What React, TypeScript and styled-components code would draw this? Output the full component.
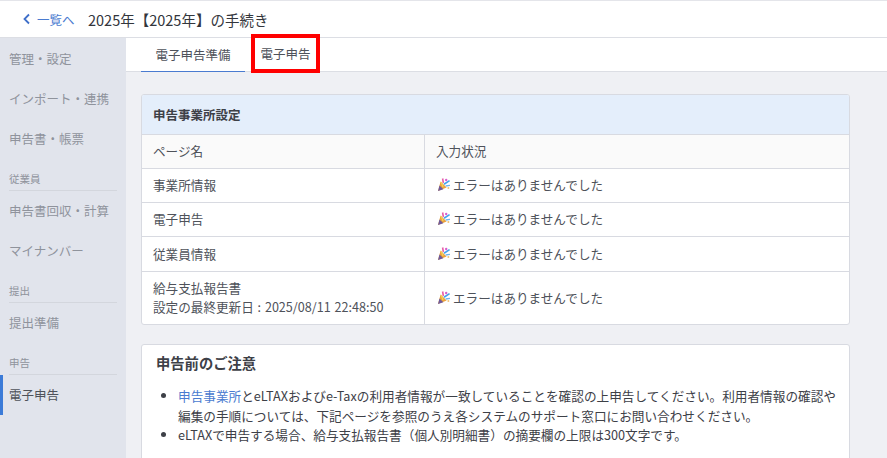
import React from "react";
import styled, { createGlobalStyle } from "styled-components";

const GlobalStyle = createGlobalStyle`
  html, body {
    margin: 0;
    height: 100%;
    overflow: hidden;
    background: #fff;
  }
  body {
    font-family: "Noto Sans CJK JP", "Noto Sans", sans-serif;
    font-size: 13px;
    color: #3d4047;
  }
`;

const Page = styled.div`
  width: 887px;
  height: 458px;
  display: flex;
  flex-direction: column;
  overflow: hidden;
`;

const Header = styled.header`
  flex: none;
  box-sizing: border-box;
  border-top: 1px solid #e4e5ea;
  border-bottom: 1px solid #dcdee4;
  height: 38px;
  padding: 0 0 0 22px;
  display: flex;
  align-items: center;
  background: #fff;
`;

const BackLink = styled.a`
  display: flex;
  align-items: center;
  gap: 6px;
  color: #4a7bd0;
  font-size: 12.5px;
  width: 66px;
`;

const Title = styled.h1`
  margin: 0;
  font-size: 14.5px;
  font-weight: 400;
  color: #33363c;
`;

const Body = styled.div`
  flex: 1;
  display: flex;
  min-height: 0;
`;

const Sidebar = styled.nav`
  width: 126px;
  flex: none;
  box-sizing: border-box;
  padding-top: 1px;
  background: #e1e4ec;
  display: flex;
  flex-direction: column;
`;

const NavItem = styled.div<{ $active?: boolean }>`
  height: 40px;
  box-sizing: border-box;
  padding-bottom: 2px;
  display: flex;
  align-items: center;
  padding-left: ${(p) => (p.$active ? "6px" : "9px")};
  border-left: ${(p) => (p.$active ? "3px solid #3b7bd8" : "none")};
  font-size: 12.5px;
  color: ${(p) => (p.$active ? "#4e525a" : "#8f939c")};
`;

const NavGroup = styled.div`
  margin: 11px 9px 0;
  height: 21px;
  box-sizing: border-box;
  border-bottom: 1px solid #d3d6dd;
  font-size: 10.5px;
  line-height: 17px;
  color: #8f939c;
`;

const Main = styled.main`
  flex: 1;
  min-width: 0;
  background: #eff0f4;
  display: flex;
  flex-direction: column;
`;

const Tabs = styled.div`
  height: 34px;
  flex: none;
  box-sizing: border-box;
  background: #fff;
  border-bottom: 1px solid #dcdee4;
  padding-left: 15px;
  display: flex;
`;

const Tab = styled.div<{ $active?: boolean }>`
  height: 34px;
  box-sizing: border-box;
  width: 104px;
  display: flex;
  align-items: center;
  justify-content: center;
  font-size: 12.5px;
  color: #4e525a;
  border-bottom: ${(p) => (p.$active ? "1px solid #4a7bd0" : "none")};
`;

const HighlightTab = styled(Tab)`
  position: relative;
  width: 69px;
  height: 39px;
  margin: -4px 0 0 6px;
  border: 4px solid #f00;
  background: #fff;
  z-index: 1;
`;

const Content = styled.div`
  padding: 22px 37px 0 15px;
  display: flex;
  flex-direction: column;
  gap: 19px;
`;

const Card = styled.section`
  background: #fff;
  border: 1px solid #d8dae1;
  border-radius: 3px;
  overflow: hidden;
`;

const CardHeading = styled.div`
  height: 39px;
  display: flex;
  align-items: center;
  padding-left: 11px;
  background: #e4eefb;
  font-weight: 700;
  font-size: 12.5px;
  color: #3d4047;
`;

const Table = styled.table`
  width: 100%;
  border-collapse: collapse;
  table-layout: fixed;
`;

const Cell = styled.td`
  border-top: 1px solid #d8dae1;
  padding: 0 11px 2px;
  height: 31px;
  font-size: 12.6px;
  line-height: 19px;
  color: #4e525a;
  tr:nth-child(3) > & {
    height: 32px;
  }
  &:first-child {
    width: 260px;
    border-right: 1px solid #d8dae1;
  }
`;

const HeadCell = styled(Cell).attrs({ as: "th" })`
  background: #fafafa;
  font-weight: 400;
  text-align: left;
`;

const TallCell = styled(Cell)`
  height: 50px;
  word-spacing: 1px;
`;

const Status = styled.span`
  display: flex;
  align-items: center;
  gap: 3px;
  padding-left: 2px;
`;

const NoticeCard = styled(Card)`
  padding: 7px 10px 0 14px;
  height: 140px;
`;

const NoticeTitle = styled.h2`
  margin: 0;
  font-size: 14.3px;
  line-height: 22px;
  font-weight: 700;
  color: #3d4047;
`;

const NoticeList = styled.ul`
  margin: 12px 0 0;
  padding: 0 0 0 22px;
  font-size: 12.65px;
  line-height: 19.5px;
  color: #3d4047;
`;

const NoticeLink = styled.a`
  color: #4a7bd0;
`;

const Chevron = () => (
  <svg width="9" height="12" viewBox="0 0 9 12" fill="none">
    <path d="M7 1.5 2.5 6 7 10.5" stroke="#3f6fc9" strokeWidth="1.8" />
  </svg>
);

const Party = () => (
  <svg width="12" height="13" viewBox="0 0 12 13">
    <path d="M0 13 2.6 3.6 8.6 9.6z" fill="#eca23c" />
    <path d="M0 13 1.5 7.4 5.4 11.2z" fill="#6d5a9c" />
    <path d="M3.2 4 5 9" stroke="#f3d35c" strokeWidth="1.2" />
    <path d="M4.6 0.5 5.4 5" stroke="#e85fa6" strokeWidth="1.6" />
    <path d="M6 6.2 11.6 2.6" stroke="#45a3ee" strokeWidth="1.7" />
    <path d="M7.6 8 12 7.4" stroke="#6fb6f2" strokeWidth="1.4" />
    <circle cx="8.2" cy="2" r="1.2" fill="#d65fd0" />
    <circle cx="10.4" cy="10" r="1" fill="#f2c476" />
  </svg>
);

const StatusText = () => (
  <Status>
    <Party />
    エラーはありませんでした
  </Status>
);

const rows = ["事業所情報", "電子申告", "従業員情報"];

export default function App() {
  return (
    <Page>
      <GlobalStyle />
      <Header>
        <BackLink>
          <Chevron />
          一覧へ
        </BackLink>
        <Title>2025年【2025年】の手続き</Title>
      </Header>
      <Body>
        <Sidebar>
          <NavItem>管理・設定</NavItem>
          <NavItem>インポート・連携</NavItem>
          <NavItem>申告書・帳票</NavItem>
          <NavGroup>従業員</NavGroup>
          <NavItem>申告書回収・計算</NavItem>
          <NavItem>マイナンバー</NavItem>
          <NavGroup>提出</NavGroup>
          <NavItem>提出準備</NavItem>
          <NavGroup>申告</NavGroup>
          <NavItem $active>電子申告</NavItem>
        </Sidebar>
        <Main>
          <Tabs>
            <Tab $active>電子申告準備</Tab>
            <HighlightTab>電子申告</HighlightTab>
          </Tabs>
          <Content>
            <Card>
              <CardHeading>申告事業所設定</CardHeading>
              <Table>
                <thead>
                  <tr>
                    <HeadCell>ページ名</HeadCell>
                    <HeadCell>入力状況</HeadCell>
                  </tr>
                </thead>
                <tbody>
                  {rows.map((name) => (
                    <tr key={name}>
                      <Cell>{name}</Cell>
                      <Cell>
                        <StatusText />
                      </Cell>
                    </tr>
                  ))}
                  <tr>
                    <TallCell>
                      給与支払報告書
                      <br />
                      設定の最終更新日 : 2025/08/11 22:48:50
                    </TallCell>
                    <TallCell>
                      <StatusText />
                    </TallCell>
                  </tr>
                </tbody>
              </Table>
            </Card>
            <NoticeCard>
              <NoticeTitle>申告前のご注意</NoticeTitle>
              <NoticeList>
                <li>
                  <NoticeLink>申告事業所</NoticeLink>
                  とeLTAXおよびe-Taxの利用者情報が一致していることを確認の上申告してください。利用者情報の確認や編集の手順については、下記ページを参照のうえ各システムのサポート窓口にお問い合わせください。
                </li>
                <li>eLTAXで申告する場合、給与支払報告書（個人別明細書）の摘要欄の上限は300文字です。</li>
              </NoticeList>
            </NoticeCard>
          </Content>
        </Main>
      </Body>
    </Page>
  );
}
